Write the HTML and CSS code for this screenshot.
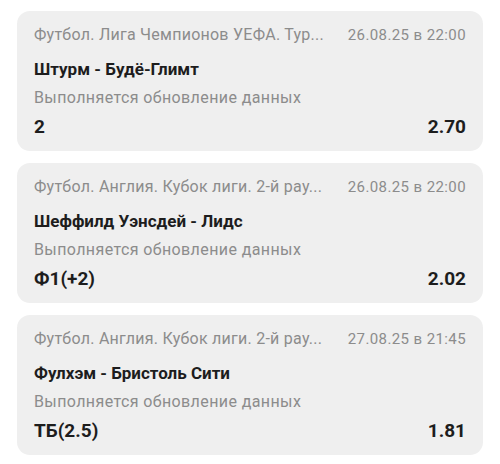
FILE: index.html
```html
<!DOCTYPE html>
<html lang="ru">
<head>
  <meta charset="UTF-8" />
  <meta name="viewport" content="width=device-width, initial-scale=1" />
  <title>Ставки</title>
  <link rel="stylesheet" href="styles.css">
</head>
<body>

  <!-- Bet list -->
  <div class="bets">
    <div class="bet">
      <div class="bet-head">
        <span class="league">Футбол. Лига Чемпионов УЕФА. Тур...</span>
        <span class="date">26.08.25 в 22:00</span>
      </div>
      <div class="match">Штурм - Будё-Глимт</div>
      <div class="status">Выполняется обновление данных</div>
      <div class="bet-foot">
        <span class="outcome">2</span>
        <span class="coef">2.70</span>
      </div>
    </div>

    <div class="bet">
      <div class="bet-head">
        <span class="league">Футбол. Англия. Кубок лиги. 2-й рау...</span>
        <span class="date">26.08.25 в 22:00</span>
      </div>
      <div class="match">Шеффилд Уэнсдей - Лидс</div>
      <div class="status">Выполняется обновление данных</div>
      <div class="bet-foot">
        <span class="outcome">Ф1(+2)</span>
        <span class="coef">2.02</span>
      </div>
    </div>

    <div class="bet">
      <div class="bet-head">
        <span class="league">Футбол. Англия. Кубок лиги. 2-й рау...</span>
        <span class="date">27.08.25 в 21:45</span>
      </div>
      <div class="match">Фулхэм - Бристоль Сити</div>
      <div class="status">Выполняется обновление данных</div>
      <div class="bet-foot">
        <span class="outcome">ТБ(2.5)</span>
        <span class="coef">1.81</span>
      </div>
    </div>
  </div>

</body>
</html>
```

FILE: styles.css
```css
/* Base */
body {
  margin: 0;
  padding: 11px 17px;
  background-color: #ffffff;
  font-family: Roboto, "Noto Sans", sans-serif;
  color: #1d1d1d;
}

/* List of bet cards */
.bets {
  display: flex;
  flex-direction: column;
  gap: 12px;
}

.bet {
  background-color: #efefef;
  border-radius: 13px;
  padding: 14px 17px 10px;
  height: 140px;
  box-sizing: border-box;
}

/* Top row: league + date */
.bet-head {
  display: flex;
  justify-content: space-between;
  align-items: baseline;
  gap: 20px;
  font-size: 16px;
  line-height: 20px;
  color: #8c8c8c;
}
.bet-head .league {
  white-space: nowrap;
  letter-spacing: 0.25px;
}
.bet-head .date {
  white-space: nowrap;
  font-size: 15px;
  letter-spacing: 0.4px;
}

.match {
  margin-top: 13px;
  font-size: 17px;
  line-height: 22px;
  font-weight: bold;
}

.status {
  margin-top: 8px;
  font-size: 16px;
  line-height: 20px;
  letter-spacing: 0.4px;
  color: #8c8c8c;
}

/* Bottom row: outcome + coefficient */
.bet-foot {
  display: flex;
  justify-content: space-between;
  margin-top: 7px;
  font-size: 19px;
  line-height: 24px;
  font-weight: bold;
}
```
